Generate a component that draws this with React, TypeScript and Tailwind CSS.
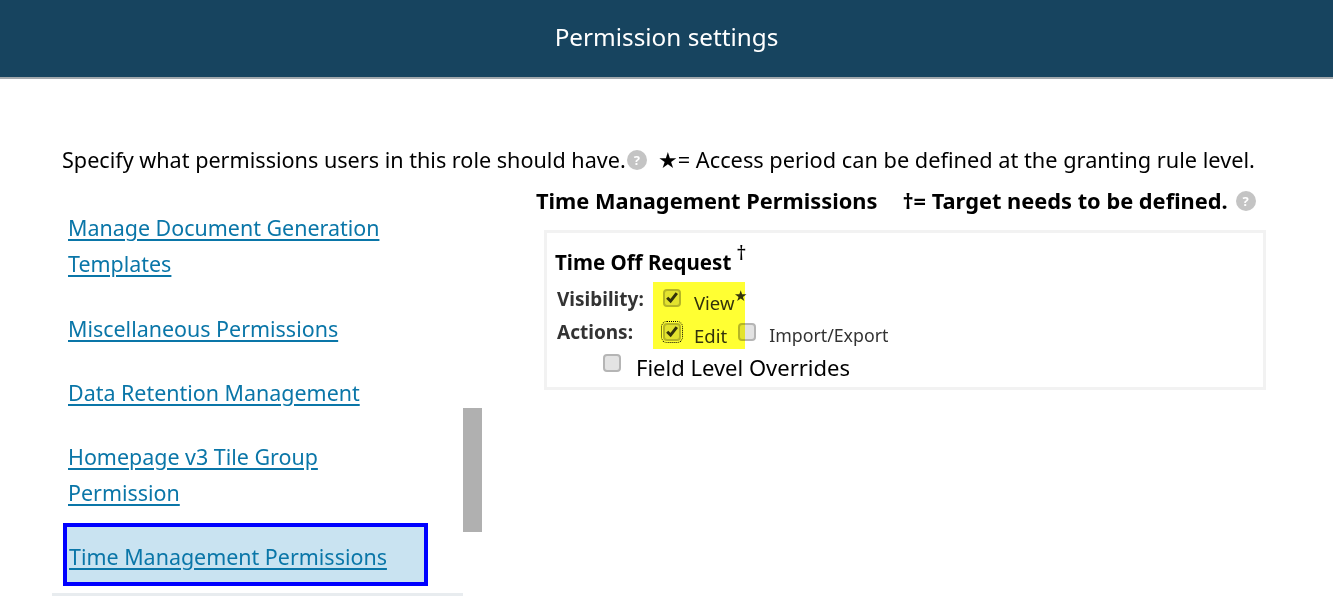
const font = "[font-family:'Noto_Sans','Open_Sans',sans-serif]";

function HelpIcon({ className = "" }: { className?: string }) {
  return (
    <span
      className={`inline-flex h-5 w-5 items-center justify-center rounded-full bg-[#c4c4c4] text-[13px] font-bold leading-none text-white ${className}`}
    >
      ?
    </span>
  );
}

function Checkbox({ checked = false, focused = false, className = "" }: { checked?: boolean; focused?: boolean; className?: string }) {
  return (
    <span
      className={`relative inline-flex h-[18px] w-[18px] shrink-0 items-center justify-center rounded-[4px] border-2 border-[#b5b5b5] bg-[#e3e3e3] ${
        focused ? "outline-1 outline-offset-1 outline-dotted outline-black" : ""
      } ${className}`}
    >
      {checked && (
        <svg viewBox="0 0 14 14" className="h-[15px] w-[15px]" fill="none" stroke="#333" strokeWidth={3}>
          <path d="M2.2 7.2 L5.6 10.6 L11.8 2.6" />
        </svg>
      )}
    </span>
  );
}

const links = [
  { label: "Manage Document Generation Templates" },
  { label: "Miscellaneous Permissions" },
  { label: "Data Retention Management" },
  { label: "Homepage v3 Tile Group Permission" },
];

export default function App() {
  return (
    <div className={`relative h-[596px] w-[1333px] overflow-hidden bg-white text-black ${font}`}>
      <header className="flex h-[79px] items-center justify-center border-b-2 border-[#a3a9ad] bg-[#17445f] pb-[3px] text-[24.3px] text-white">
        Permission settings
      </header>

      <div className="flex items-center pl-[62px] pt-[66px] text-[21.6px] leading-[30px]">
        <span>Specify what permissions users in this role should have.</span>
        <HelpIcon className="ml-px" />
        <span className="ml-[11px] text-[21.75px]">★= Access period can be defined at the granting rule level.</span>
      </div>

      <div className="flex">
        <aside className="relative ml-[52px] h-[421px] w-[411px] border-b-[3px] border-[#e8ecef] pt-[21px] text-[21.45px] leading-9 text-[#0a76a8]">
          {links.map((link) => (
            <div key={link.label} className="w-[340px] py-[14px] pl-4 first:pb-[15px]">
              <a className="underline underline-offset-[3px]">{link.label}</a>
            </div>
          ))}
          <div className="-mt-[2px] ml-[11px] flex h-[63px] w-[365px] items-center border-4 border-[#0000ff] bg-[#c9e3f1] pl-[2px] pt-[5px]">
            <a className="underline underline-offset-[3px]">Time Management Permissions</a>
          </div>
        </aside>

        <div className="absolute left-[463px] top-[408px] h-[124px] w-[19px] bg-[#b0b0b0]" />

        <main className="ml-[73px] w-[730px]">
          <div className="flex h-[52px] items-center text-[21.8px] font-bold">
            <span>Time Management Permissions</span>
            <span className="ml-[25px]">†= Target needs to be defined.</span>
            <HelpIcon className="ml-2" />
          </div>

          <section className="relative ml-[8px] mt-[3px] h-[160px] w-[722px] border-[3px] border-[#f2f2f2] pl-2 pt-[13px]">
            <div className="flex items-start text-[20.5px] font-bold leading-[32px]">
              Time Off Request
              <sup className="ml-[5px] mt-[9px] text-[20px] font-normal leading-[16px]">†</sup>
            </div>
            <div className="mt-[5px] flex h-[33px] items-center text-[19px] font-bold text-[#333]">
              <span className="ml-[2px] w-[106px]">Visibility:</span>
              <Checkbox checked className="-mt-[4px]" />
              <span className="ml-[13px] mt-[6px] text-[18.5px] font-normal">View</span>
              <span className="-mt-[8px] text-[15px] font-normal">★</span>
            </div>
            <div className="flex h-[33px] items-center text-[19px] font-bold text-[#333]">
              <span className="ml-[2px] w-[106px]">Actions:</span>
              <Checkbox checked focused className="-mt-[2px]" />
              <span className="ml-[13px] mt-[6px] text-[18.5px] font-normal">Edit</span>
              <Checkbox className="ml-[11px] -mt-[2px]" />
              <span className="ml-[13px] mt-[6px] text-[17.75px] font-normal">Import/Export</span>
            </div>
            <div className="ml-[48px] flex h-[33px] items-center text-[22px]">
              <Checkbox className="-mt-[6px]" />
              <span className="ml-[15px] mt-[4px]">Field Level Overrides</span>
            </div>
            <div className="absolute left-[106px] top-[49px] h-[67px] w-[92px] bg-[#ffff33] mix-blend-multiply" />
          </section>
        </main>
      </div>
    </div>
  );
}
